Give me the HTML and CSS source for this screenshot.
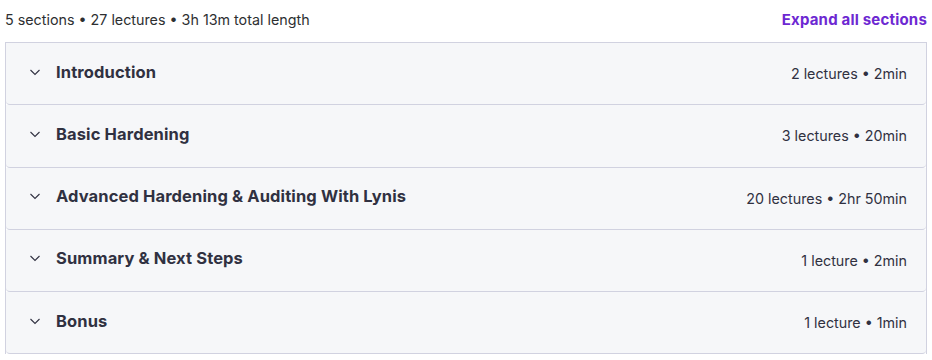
FILE: index.html
```html
<!DOCTYPE html>
<html>
<head>
<meta charset="utf-8">
<link rel="stylesheet" href="styles.css">
</head>
<body>
<div class="page">
  <div class="top">
    <span class="summary">5 sections • 27 lectures • 3h 13m total length</span>
    <button class="expand">Expand all sections</button>
  </div>
  <div class="list">
    <div class="row">
      <div class="left"><svg class="chev" viewBox="0 0 12 12"><path d="M1.5 4 L6 8.5 L10.5 4" /></svg><span class="title">Introduction</span></div>
      <span class="meta">2 lectures • 2min</span>
    </div>
    <div class="row">
      <div class="left"><svg class="chev" viewBox="0 0 12 12"><path d="M1.5 4 L6 8.5 L10.5 4" /></svg><span class="title">Basic Hardening</span></div>
      <span class="meta">3 lectures • 20min</span>
    </div>
    <div class="row">
      <div class="left"><svg class="chev" viewBox="0 0 12 12"><path d="M1.5 4 L6 8.5 L10.5 4" /></svg><span class="title">Advanced Hardening &amp; Auditing With Lynis</span></div>
      <span class="meta">20 lectures • 2hr 50min</span>
    </div>
    <div class="row">
      <div class="left"><svg class="chev" viewBox="0 0 12 12"><path d="M1.5 4 L6 8.5 L10.5 4" /></svg><span class="title">Summary &amp; Next Steps</span></div>
      <span class="meta">1 lecture • 2min</span>
    </div>
    <div class="row">
      <div class="left"><svg class="chev" viewBox="0 0 12 12"><path d="M1.5 4 L6 8.5 L10.5 4" /></svg><span class="title">Bonus</span></div>
      <span class="meta">1 lecture • 1min</span>
    </div>
  </div>
</div>
</body>
</html>
```
FILE: styles.css
```css
html, body {
  margin: 0;
  padding: 0;
  background: #ffffff;
}
body {
  font-family: Inter, "Noto Sans", sans-serif;
  color: #2d2f31;
}
.page {
  padding: 0 5px;
}
.top {
  height: 42px;
  display: flex;
  align-items: center;
  justify-content: space-between;
}
.summary {
  font-size: 14.3px;
  color: #2d2f31;
  position: relative;
  top: -2px;
}
.expand {
  border: none;
  background: none;
  padding: 0;
  font-family: inherit;
  font-size: 15px;
  font-weight: 700;
  letter-spacing: 0.2px;
  color: #6d28d2;
  position: relative;
  top: -2px;
}
.list {
  border: 1px solid #d1d2e0;
  border-bottom: none;
}
.row {
  height: 61.25px;
  border-bottom: 1px solid #d1d2e0;
  background: #f6f7f9;
  display: flex;
  align-items: center;
  justify-content: space-between;
  padding: 0 19px 0 23px;
  border-radius: 0 0 4px 4px;
}
.left {
  display: flex;
  align-items: center;
  gap: 15px;
  position: relative;
  top: -2px;
}
.chev {
  width: 12px;
  height: 12px;
  fill: none;
  stroke: #303141;
  stroke-width: 1.1;
}
.title {
  font-size: 16.5px;
  font-weight: 700;
  letter-spacing: 0.12px;
  color: #303141;
}
.meta {
  font-size: 14.3px;
  color: #303141;
}
```
